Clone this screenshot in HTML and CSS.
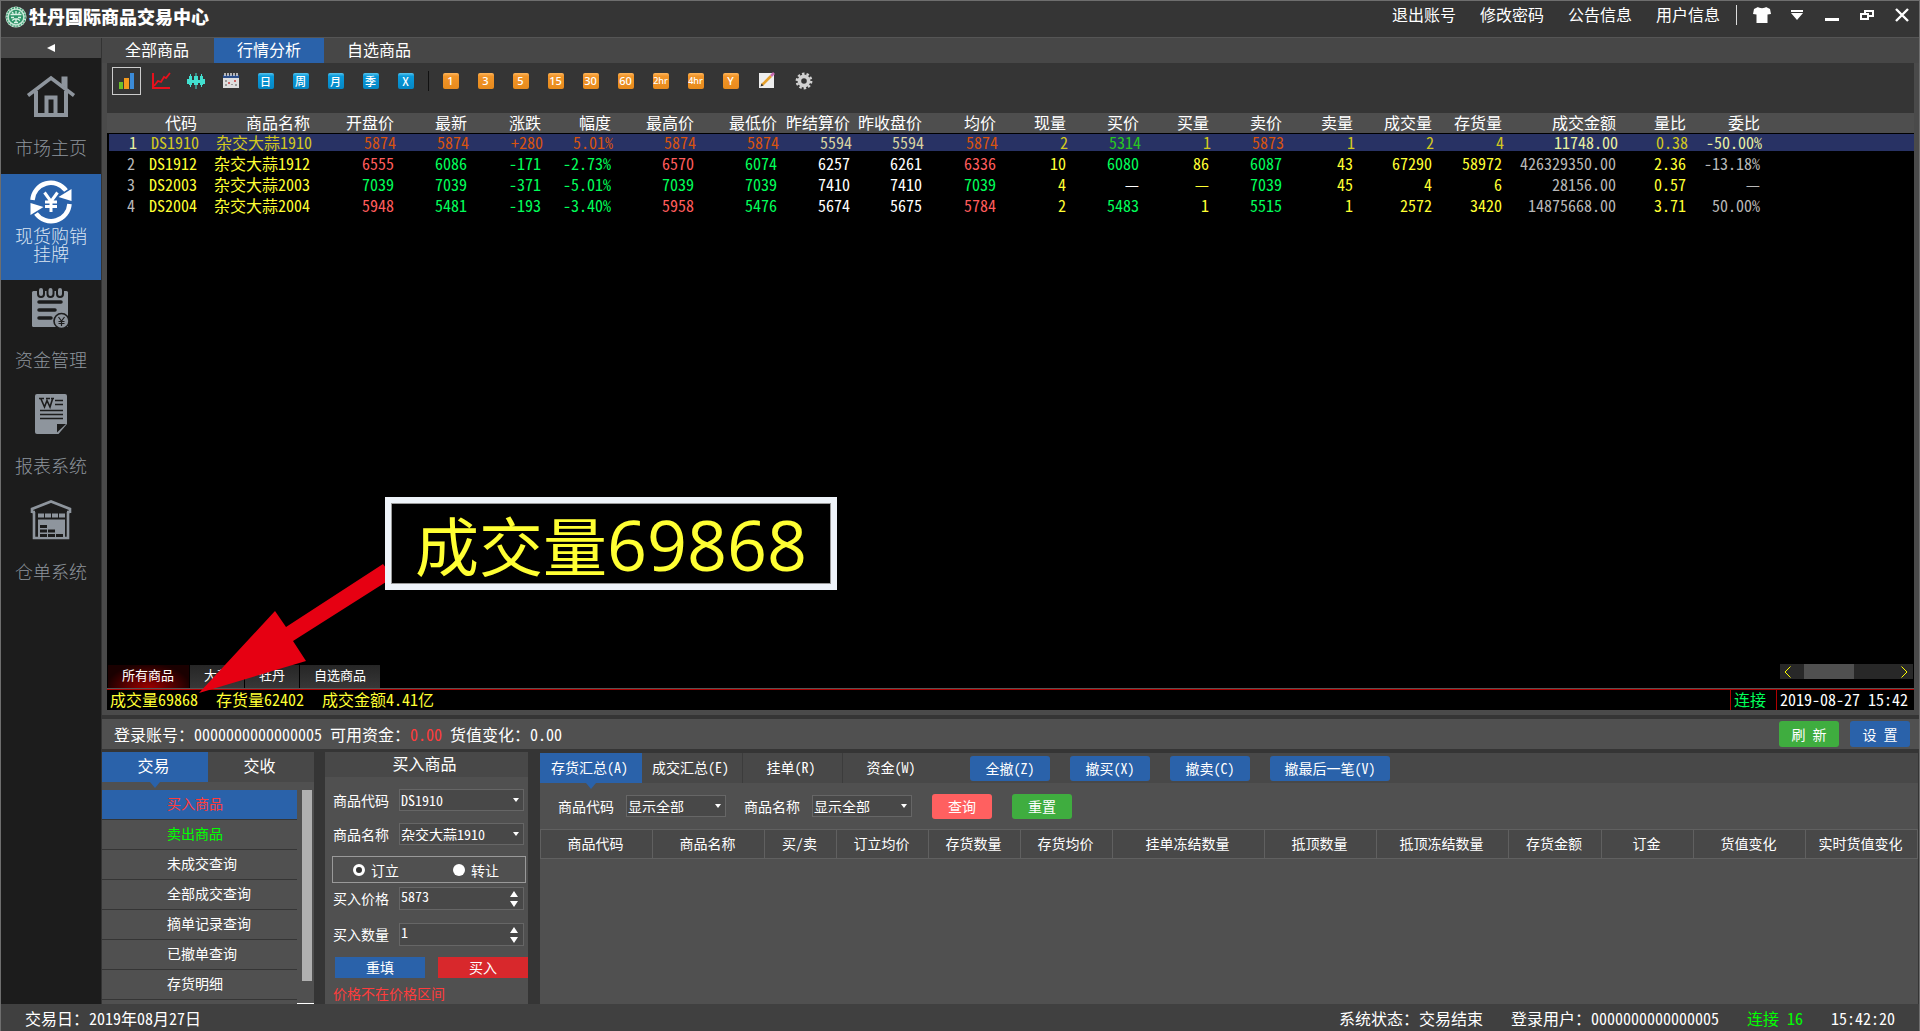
FILE: index.html
```html
<!DOCTYPE html>
<html lang="zh-CN">
<head>
<meta charset="utf-8">
<title>牡丹国际商品交易中心</title>
<link rel="stylesheet" href="styles.css">
</head>
<body>
<header class="titlebar">
  <svg class="logo" width="22" height="22" viewBox="0 0 22 22" aria-hidden="true">
    <circle cx="11" cy="11" r="10.5" fill="#c9e8d8"/>
    <circle cx="11" cy="11" r="9.2" fill="none" stroke="#3f9a72" stroke-width="1.4" stroke-dasharray="2 1"/>
    <circle cx="11" cy="11" r="7.2" fill="#2e9469"/>
    <path d="M5.500 8.500h11M7 6l1.500 1.500M15 6l-1.500 1.500M11 5v4M6 11.500h3M13 11.500h3M7 14.500l2.500-1.500h3l2.500 1.500M9 16.500h4M11 13v3.500" stroke="#d9f2e6" stroke-width="1.300" fill="none"/>
  </svg>
  <h1 class="brand">牡丹国际商品交易中心</h1>
  <nav class="account-menu">
    <a href="#">退出账号</a><a href="#">修改密码</a><a href="#">公告信息</a><a href="#">用户信息</a>
  </nav>
  <div class="window-tools">
    <button aria-label="换肤"><svg width="18" height="18" viewBox="0 0 18 18"><path fill="#fff" d="M5 1c1 1.500 7 1.500 8 0l4 2 1 5-3.500.500V17h-11V8.500L0 8l1-5z"/></svg></button>
    <button aria-label="菜单"><svg width="14" height="12" viewBox="0 0 14 12"><path fill="#fff" d="M1 1h12v2H1zM1 4h12L7 11z"/></svg></button>
    <button aria-label="最小化"><svg width="14" height="14" viewBox="0 0 14 14"><path fill="#fff" d="M0 10h14v3H0z"/></svg></button>
    <button aria-label="还原"><svg width="14" height="12" viewBox="0 0 14 12"><path fill="none" stroke="#fff" stroke-width="2" d="M5 4.500V2h8v5H8M1 5h7v5H1z"/></svg></button>
    <button aria-label="关闭"><svg width="14" height="14" viewBox="0 0 14 14"><path stroke="#fff" stroke-width="2.400" d="M1 1l12 12M13 1L1 13"/></svg></button>
  </div>
</header>

<div class="workspace">
  <aside class="sidebar">
    <button class="collapse" aria-label="收起"><svg width="8" height="8" viewBox="0 0 8 8"><path fill="#fff" d="M8 0v8L0 4z"/></svg></button>
    <nav class="modules">
      <a class="module" href="#">
        <svg width="50" height="44" viewBox="0 0 50 44"><g fill="none" stroke="#8e959d" stroke-width="4"><path d="M2 21.500L25 4l23 17.500" stroke-width="3.500"/><path d="M10 17v24h30V17" stroke-width="4"/><path d="M37 12V4h3v10" stroke-width="3"/><path d="M20.500 41V23.500h9V41" stroke-width="4"/></g></svg>
        <span>市场主页</span>
      </a>
      <a class="module active" href="#">
        <svg width="44" height="44" viewBox="0 0 44 44"><g fill="none" stroke="#fff" stroke-width="4.500"><path d="M3.500 20A18.500 18.500 0 0 1 37 10.500"/><path d="M40.500 24A18.500 18.500 0 0 1 7 33.500"/></g><path fill="#fff" d="M42.500 9v12l-13-4zM1.500 35V23l13 4z"/><path d="M15.500 12.500l6.500 9 6.500-9M16 22h12M16 26.500h12M22 21v11" fill="none" stroke="#fff" stroke-width="3"/></svg>
        <span>现货购销<br>挂牌</span>
      </a>
      <a class="module" href="#">
        <svg width="42" height="44" viewBox="0 0 42 44"><path fill="#8e959d" d="M2 6.500q0-1.500 1.500-1.500h33q1.500 0 1.500 1.500V41H3.500Q2 41 2 39.500z"/><g fill="#8e959d" stroke="#1c1c1c" stroke-width="2"><rect x="8" y="1" width="6" height="10" rx="3"/><rect x="17.500" y="1" width="6" height="10" rx="3"/><rect x="27" y="1" width="6" height="10" rx="3"/></g><path d="M9 16h22M9 24h16M9 32h12" stroke="#1c1c1c" stroke-width="3.500" stroke-linecap="round"/><circle cx="31.500" cy="35" r="7.500" fill="#8e959d" stroke="#1c1c1c" stroke-width="1.600"/><path d="M28.500 31l3 4 3-4M28.500 35.500h6M28.500 37.500h6M31.500 35v5" fill="none" stroke="#1c1c1c" stroke-width="1.200"/></svg>
        <span>资金管理</span>
      </a>
      <a class="module" href="#">
        <svg width="36" height="44" viewBox="0 0 36 44"><path fill="#8e959d" d="M2 4q0-2 2-2h28q2 0 2 2v28l-8.500 10H4q-2 0-2-2z"/><path fill="#1c1c1c" d="M24 32h9l-9 8.500z"/><path d="M22 8.500h8M22 12.500h8M7 18.500h23M7 22.500h23M7 26.500h23" stroke="#1c1c1c" stroke-width="1.300"/><path d="M6 6.500h5M8 7l3.500 8L14 8.500 17 15l2.500-8M13 6.500h4M18 6.500h3" fill="none" stroke="#1c1c1c" stroke-width="1.600"/></svg>
        <span>报表系统</span>
      </a>
      <a class="module" href="#">
        <svg width="42" height="44" viewBox="0 0 42 44"><path d="M2 15v-4L21 3.500 40 11v4M4 14v26h34V14M2 14h3M37 14h3" fill="none" stroke="#8e959d" stroke-width="2.600"/><path fill="#8e959d" d="M8 15.500h6v4H8zM15 15.500h6v4h-6zM22 15.500h6v4h-6zM29 15.500h6v4h-6zM8 21.500h27V40H8z"/><path fill="#1c1c1c" d="M10 27h7v3h-7zM10 31.500h7v3h-7zM10 36h7v3h-7zM18 31.500h7v3h-7zM18 36h7v3h-7zM26 36h7v3h-7z"/></svg>
        <span>仓单系统</span>
      </a>
    </nav>
  </aside>

  <main class="main">
    <nav class="view-tabs">
      <a href="#">全部商品</a><a class="active" href="#">行情分析</a><a href="#">自选商品</a>
    </nav>

    <section class="quotes">
      <div class="toolbar">
        <button class="tool selected" aria-label="报价"><svg width="18" height="18" viewBox="0 0 18 18"><path fill="#6abf2a" d="M1 10h4v7H1z"/><path fill="#f39a1e" d="M6 6h5v11H6z"/><path fill="#3b8bd8" d="M12 1h4v16h-4z"/></svg></button>
        <button class="tool" aria-label="分时"><svg width="20" height="18" viewBox="0 0 20 18"><path d="M2 1v15h17" fill="none" stroke="#e8101c" stroke-width="2"/><path d="M3 14l4-5 3 1 3-5 2 1 4-5" fill="none" stroke="#e8101c" stroke-width="1.800"/></svg></button>
        <button class="tool" aria-label="K线"><svg width="18" height="18" viewBox="0 0 18 18"><path fill="#42e0d0" d="M0 7h2v5H0zM2 4h3v9H2zM3 2h1v13H3zM5 8h2v3H5zM7 4h4v9H7zM8.500 1h1v16h-1zM11 8h2v3h-2zM13 4h3v9h-3zM14 2h1v13h-1zM16 7h2v5h-2z"/></svg></button>
        <button class="tool" aria-label="历史"><svg width="16" height="16" viewBox="0 0 16 16"><path fill="#dedede" d="M0 2h16v13H0z"/><path fill="#2d4f8a" d="M0 2h16v3H0z"/><path stroke="#ddd" stroke-width="1.500" d="M2 0v3M5 0v3M8 0v3M11 0v3M14 0v3"/><path fill="#999" d="M2 7h2v2H2zM2 11h2v2H2zM12 11h2v2h-2zM8 11h2v1H8z"/><path fill="#c66" d="M5 9h2v2H5zM11 7h2v2h-2z"/></svg></button>
        <button class="tool"><span class="chip">日</span></button>
        <button class="tool"><span class="chip">周</span></button>
        <button class="tool"><span class="chip">月</span></button>
        <button class="tool"><span class="chip">季</span></button>
        <button class="tool"><span class="chip">X</span></button>
        <span class="divider"></span>
        <button class="tool"><span class="chip minute">1</span></button>
        <button class="tool"><span class="chip minute">3</span></button>
        <button class="tool"><span class="chip minute">5</span></button>
        <button class="tool"><span class="chip minute">15</span></button>
        <button class="tool"><span class="chip minute">30</span></button>
        <button class="tool"><span class="chip minute">60</span></button>
        <button class="tool"><span class="chip minute hour">2hr</span></button>
        <button class="tool"><span class="chip minute hour">4hr</span></button>
        <button class="tool"><span class="chip minute">Y</span></button>
        <button class="tool util" aria-label="画线"><svg width="16" height="18" viewBox="0 0 16 18"><path fill="#eee" d="M0 1h15v15H0z"/><path d="M3 13L12 4" stroke="#e5a02c" stroke-width="2.600"/><path d="M12 4l3-3" stroke="#c86ab0" stroke-width="2.600"/><path fill="#333" d="M1.500 14.500l1-3 2 2z"/></svg></button>
        <button class="tool util" aria-label="设置"><svg width="18" height="18" viewBox="0 0 18 18"><circle cx="9" cy="9" r="7.200" fill="none" stroke="#d2d2d2" stroke-width="2.400" stroke-dasharray="2.500 2.026"/><circle cx="9" cy="9" r="4.600" fill="none" stroke="#d2d2d2" stroke-width="3.600"/></svg></button>
      </div>

      <table class="quote-table">
        <colgroup><col class="w28"><col class="w62"><col class="w113"><col class="w84"><col class="w73"><col class="w74"><col class="w70"><col class="w83"><col class="w83"><col class="w73"><col class="w72"><col class="w74"><col class="w70"><col class="w73"><col class="w70"><col class="w73"><col class="w71"><col class="w79"><col class="w70"><col class="w114"><col class="w70"><col class="w74"><col></colgroup>
        <thead><tr><th></th><th>代码</th><th>商品名称</th><th>开盘价</th><th>最新</th><th>涨跌</th><th>幅度</th><th>最高价</th><th>最低价</th><th>昨结算价</th><th>昨收盘价</th><th>均价</th><th>现量</th><th>买价</th><th>买量</th><th>卖价</th><th>卖量</th><th>成交量</th><th>存货量</th><th>成交金额</th><th>量比</th><th>委比</th><th></th></tr></thead>
        <tbody>
          <tr class="selected"><td class="p">1</td><td class="y">DS1910</td><td class="y">杂交大蒜1910</td><td class="r">5874</td><td class="r">5874</td><td class="r">+280</td><td class="r">5.01%</td><td class="r">5874</td><td class="r">5874</td><td class="w">5594</td><td class="w">5594</td><td class="r">5874</td><td class="y">2</td><td class="g">5314</td><td class="y">1</td><td class="r">5873</td><td class="y">1</td><td class="y">2</td><td class="y">4</td><td class="p">11748.00</td><td class="y">0.38</td><td class="p">-50.00%</td><td></td></tr>
          <tr><td class="p">2</td><td class="y">DS1912</td><td class="y">杂交大蒜1912</td><td class="r">6555</td><td class="g">6086</td><td class="g">-171</td><td class="g">-2.73%</td><td class="r">6570</td><td class="g">6074</td><td class="w">6257</td><td class="w">6261</td><td class="r">6336</td><td class="y">10</td><td class="g">6080</td><td class="y">86</td><td class="g">6087</td><td class="y">43</td><td class="y">67290</td><td class="y">58972</td><td class="p">426329350.00</td><td class="y">2.36</td><td class="p">-13.18%</td><td></td></tr>
          <tr><td class="p">3</td><td class="y">DS2003</td><td class="y">杂交大蒜2003</td><td class="g">7039</td><td class="g">7039</td><td class="g">-371</td><td class="g">-5.01%</td><td class="g">7039</td><td class="g">7039</td><td class="w">7410</td><td class="w">7410</td><td class="g">7039</td><td class="y">4</td><td class="w">—</td><td class="y">—</td><td class="g">7039</td><td class="y">45</td><td class="y">4</td><td class="y">6</td><td class="p">28156.00</td><td class="y">0.57</td><td class="p">—</td><td></td></tr>
          <tr><td class="p">4</td><td class="y">DS2004</td><td class="y">杂交大蒜2004</td><td class="r">5948</td><td class="g">5481</td><td class="g">-193</td><td class="g">-3.40%</td><td class="r">5958</td><td class="g">5476</td><td class="w">5674</td><td class="w">5675</td><td class="r">5784</td><td class="y">2</td><td class="g">5483</td><td class="y">1</td><td class="g">5515</td><td class="y">1</td><td class="y">2572</td><td class="y">3420</td><td class="p">14875668.00</td><td class="y">3.71</td><td class="p">50.00%</td><td></td></tr>
        </tbody>
      </table>

      <div class="board-foot">
        <nav class="board-tabs"><a class="active" href="#">所有商品</a><a href="#">大蒜</a><a href="#">牡丹</a><a href="#">自选商品</a></nav>
        <div class="hscroll">
          <svg width="7" height="12" viewBox="0 0 7 12"><path d="M6.500.500L1 6l5.500 5.500" fill="none" stroke="#ff0"/></svg>
          <span class="thumb"></span>
          <svg class="next" width="7" height="12" viewBox="0 0 7 12"><path d="M.500.500L6 6 .500 11.500" fill="none" stroke="#ff0"/></svg>
        </div>
      </div>
      <div class="totals">
        <span>成交量69868</span><span>存货量62402</span><span>成交金额4.41亿</span>
        <span class="link-state">连接</span><time class="market-time">2019-08-27 15:42</time>
      </div>

      <svg class="arrow" width="194" height="130" viewBox="0 0 194 130" aria-hidden="true"><path fill="#e60012" d="M0 129L76 47l11 16L184 0l10 13-7 5L94 77l13 20z"/></svg>
      <div class="callout"><span class="callout-label">成交量</span><span class="callout-value">69868</span></div>
    </section>

    <section class="account-bar">
      <p>登录账号：0000000000000005 可用资金：<span class="alert">0.00</span> 货值变化：0.00</p>
      <button class="btn green tall">刷 新</button><button class="btn blue tall">设 置</button>
    </section>

    <div class="desk">
      <section class="orders">
        <nav class="order-tabs"><a class="active" href="#">交易</a><a href="#">交收</a></nav>
        <div class="order-body">
          <ul class="order-menu">
            <li class="active"><a class="buy" href="#">买入商品</a></li>
            <li><a class="sell" href="#">卖出商品</a></li>
            <li><a href="#">未成交查询</a></li>
            <li><a href="#">全部成交查询</a></li>
            <li><a href="#">摘单记录查询</a></li>
            <li><a href="#">已撤单查询</a></li>
            <li><a href="#">存货明细</a></li>
          </ul>
          <div class="vscroll"><span></span></div>
        </div>
      </section>

      <form class="ticket">
        <h2>买入商品</h2>
        <div class="field"><label for="code">商品代码</label><span class="select"><select id="code"><option>DS1910</option></select></span></div>
        <div class="field"><label for="name">商品名称</label><span class="select"><select id="name"><option>杂交大蒜1910</option></select></span></div>
        <div class="mode">
          <label><input type="radio" name="mode" checked>订立</label>
          <label><input type="radio" name="mode">转让</label>
        </div>
        <div class="field number"><label for="price">买入价格</label><span class="spin"><input id="price" type="text" value="5873"><svg width="8" height="16" viewBox="0 0 8 16"><path fill="#fff" d="M4 0l4 6H0zM0 10h8l-4 6z"/></svg></span></div>
        <div class="field number"><label for="qty">买入数量</label><span class="spin"><input id="qty" type="text" value="1"><svg width="8" height="16" viewBox="0 0 8 16"><path fill="#fff" d="M4 0l4 6H0zM0 10h8l-4 6z"/></svg></span></div>
        <div class="actions"><button type="button" class="reset">重填</button><button type="button" class="submit">买入</button></div>
        <p class="error">价格不在价格区间</p>
      </form>

      <section class="holdings">
        <div class="holding-bar">
          <nav class="holding-tabs"><a class="active" href="#">存货汇总(A)</a><a href="#">成交汇总(E)</a><a href="#">挂单(R)</a><a href="#">资金(W)</a></nav>
          <div class="cancel"><button class="btn blue">全撤(Z)</button><button class="btn blue">撤买(X)</button><button class="btn blue">撤卖(C)</button><button class="btn blue wide">撤最后一笔(V)</button></div>
        </div>
        <div class="filter">
          <label for="fcode">商品代码</label><span class="select"><select id="fcode"><option>显示全部</option></select></span>
          <label class="second" for="fname">商品名称</label><span class="select"><select id="fname"><option>显示全部</option></select></span>
          <button class="btn red">查询</button><button class="btn green">重置</button>
        </div>
        <table class="holding-table">
          <colgroup><col class="w112"><col class="w112"><col class="w72"><col class="w92"><col class="w92"><col class="w92"><col class="w152"><col class="w112"><col class="w132"><col class="w93"><col class="w92"><col class="w112"><col></colgroup>
          <thead><tr><th>商品代码</th><th>商品名称</th><th>买/卖</th><th>订立均价</th><th>存货数量</th><th>存货均价</th><th>挂单冻结数量</th><th>抵顶数量</th><th>抵顶冻结数量</th><th>存货金额</th><th>订金</th><th>货值变化</th><th>实时货值变化</th></tr></thead>
        </table>
      </section>
    </div>
  </main>
</div>

<footer class="statusbar">
  <span class="trade-day">交易日：2019年08月27日</span>
  <span>系统状态：交易结束</span>
  <span>登录用户：0000000000000005</span>
  <span class="online">连接 16</span>
  <time>15:42:20</time>
</footer>
</body>
</html>
```
FILE: styles.css
```css
* { box-sizing: border-box; }

body {
  margin: 0;
  min-height: 100vh;
  display: flex;
  flex-direction: column;
  background: #353535;
  border: 1px solid #6e6e6e;
  border-bottom: 0;
  color: #fff;
  font: 300 16px/20px "Noto Sans Mono CJK SC", "Noto Sans CJK SC", monospace;
}

a { color: inherit; text-decoration: none; }
button, input, select { font: inherit; color: inherit; }
button { padding: 0; border: 0; background: none; cursor: pointer; white-space: nowrap; }
svg { display: block; flex: none; }
h1, h2, p, ul { margin: 0; padding: 0; font-weight: inherit; }
ul { list-style: none; }
table { border-collapse: collapse; border-spacing: 0; table-layout: fixed; width: 100%; }

/* title bar */
.titlebar {
  display: flex;
  align-items: flex-start;
  height: 37px;
  padding: 4px 0 0 4px;
  border-bottom: 1px solid #555;
}
.logo { margin-top: 1px; }
.brand { margin-left: 2px; font: 900 18px/22px "Noto Sans CJK SC", sans-serif; }
.account-menu { display: flex; gap: 24px; margin-left: auto; line-height: 18px; }
.window-tools { display: flex; align-items: center; height: 20px; margin-left: 16px; border-left: 1px solid #ddd; padding-left: 7px; }
.window-tools button { display: flex; justify-content: center; width: 35px; }

.workspace { flex: 1; display: flex; }

/* module sidebar */
.sidebar { flex: none; width: 101px; background: #1c1c1c; border-right: 1px solid #333; }
.collapse { display: flex; align-items: center; justify-content: center; width: 100%; height: 20px; background: #474747; }
.modules { padding-top: 10px; }
.module {
  display: flex;
  flex-direction: column;
  align-items: center;
  height: 106px;
  padding-top: 6px;
  gap: 20px;
  color: #8e959d;
  font: 300 18px/18px "Noto Sans CJK SC", sans-serif;
  text-align: center;
}
.module.active { gap: 2px; background: #2a62aa; color: #dbe5f2; }

.main { flex: 1; min-width: 0; display: flex; flex-direction: column; background: #4a4a4a; }

.view-tabs { display: flex; height: 25px; background: #474747; }
.view-tabs a { width: 110px; line-height: 22px; text-align: center; }
.view-tabs a.active { background: #2a62aa; }
.view-tabs a:first-child { width: 112px; padding-right: 2px; }

/* quotation board */
.quotes { position: relative; flex: 1; display: flex; flex-direction: column; margin: 0 5px; background: #000; }
.toolbar { display: flex; align-items: flex-start; height: 50px; padding: 4px 2px; background: #353535; }
.tool { display: flex; align-items: center; justify-content: center; width: 35px; height: 28px; border: 1px solid transparent; }
.tool.selected { width: 29px; margin: 0 2px 0 3px; border-color: #ccc; }
.tool.util { width: 37px; }
.divider { width: 1px; height: 20px; margin: 4px 4px 0 5px; background: #111; }
.chip {
  width: 16px; height: 16px;
  border-radius: 2px;
  background: linear-gradient(#58c4ec, #0a9adb 20%, #0587c4);
  font: 500 11px/16px "Noto Sans CJK SC", sans-serif;
  text-align: center;
}
.minute { background: linear-gradient(#ffb65c, #f2962a 20%, #e78a1c); font-family: "Noto Sans", sans-serif; }
.hour { font-size: 9px; }

.w28 { width: 28px; } .w62 { width: 62px; } .w70 { width: 70px; } .w71 { width: 71px; }
.w72 { width: 72px; } .w73 { width: 73px; } .w74 { width: 74px; } .w79 { width: 79px; }
.w83 { width: 83px; } .w84 { width: 84px; } .w92 { width: 92px; } .w93 { width: 93px; }
.w112 { width: 112px; } .w113 { width: 113px; } .w114 { width: 114px; } .w132 { width: 132px; }
.w152 { width: 152px; }

.quote-table th, .quote-table td { padding: 0; text-align: right; vertical-align: top; font-weight: inherit; white-space: nowrap; }
.quote-table thead { background: #4e4e4e; }
.quote-table th { height: 20px; line-height: 18px; }
.quote-table td { height: 21px; line-height: 19px; }
.y { color: #ff3; } .r { color: #ff5c5c; } .g { color: #00ff5a; } .w { color: #fff; } .p { color: #b8b8b8; }
.quote-table .selected { background: linear-gradient(#283264, #283264) 0 1px / 100% 17px no-repeat; }
.quote-table .selected td { position: relative; left: 2px; }
.selected .y { color: #d2c81e; } .selected .r { color: #d8540e; } .selected .g { color: #28c81e; }
.selected .w { color: #d8d2a0; } .selected .p { color: #e8f0a0; }

.board-foot { display: flex; align-items: flex-end; justify-content: space-between; margin-top: auto; }
.board-tabs { display: flex; gap: 1px; padding-left: 1px; font-size: 13px; }
.board-tabs a { height: 24px; padding: 0 14px; line-height: 19px; background: linear-gradient(#262626, #383838); }
.board-tabs a.active { padding: 0 15px 0 14px; background: radial-gradient(ellipse at 50% 100%, #a00000, #1a0000 75%); }
.hscroll { display: flex; align-items: center; width: 133px; height: 15px; margin: 0 1px 10px 0; padding: 0 5px 0 4px; background: #282828; }
.thumb { width: 50px; height: 15px; margin-left: 13px; background: #505050; }
.next { margin-left: auto; }

.totals { display: flex; gap: 18px; height: 21px; padding-left: 3px; line-height: 18px; color: #ff3; border-top: 1px solid #b00000; box-shadow: 0 -1px #555; }
.link-state { width: 46px; margin-left: auto; padding-left: 3px; color: #00ff5a; border-left: 1px solid #b00000; }
.market-time { width: 138px; margin-left: -18px; padding-left: 3px; color: #fff; border-left: 1px solid #b00000; white-space: nowrap; }

/* enlarged reading pinned over the board */
.callout {
  position: absolute; left: 278px; bottom: 120px;
  display: flex; align-items: baseline; justify-content: center;
  width: 452px; height: 93px;
  border: 6px solid #eef3f9;
  outline: 1px solid #999; outline-offset: -7px;
  background: #000; color: #ff3;
  font: 400 64px/80px "Noto Sans CJK SC", sans-serif;
}
.callout-value { font-family: "Open Sans", sans-serif; font-size: 70px; line-height: 80px; }
.arrow { position: absolute; left: 92px; bottom: 16px; }

/* account summary */
.account-bar { display: flex; align-items: center; gap: 11px; height: 37px; margin-top: 5px; padding: 0 9px 0 12px; background: #505050; border: solid #353535; border-width: 4px 0 3px; }
.account-bar p { flex: 1; }
.alert { color: #ff3c3c; }

.btn { width: 80px; height: 25px; border-radius: 3px; font-size: 14px; line-height: 24px; }
.btn.wide { width: 120px; }
.btn.tall { width: 60px; height: 26px; }
.blue { background: #2a62aa; }
.green { background: #3fad3f; }
.red { background: #ff6060; }

/* trading desk */
.desk { display: flex; background: #353535; font-size: 14px; }

.orders { flex: none; display: flex; flex-direction: column; width: 212px; background: #505050; }
.order-tabs { display: flex; height: 30px; background: #484848; font-size: 16px; }
.order-tabs a, .holding-tabs a { position: relative; text-align: center; }
.order-tabs a { flex: 1; padding-right: 3px; line-height: 27px; }
.order-tabs .active, .holding-tabs .active { background: #2a62aa; }
.order-tabs .active::after, .holding-tabs .active::after {
  content: ""; position: absolute; left: 50%; top: 100%; margin-left: -5px;
  border: 5px solid transparent; border-top: 6px solid #2a62aa; border-bottom: 0;
}
.order-body { flex: 1 1 0; display: flex; justify-content: space-between; margin-top: 8px; min-height: 0; }
.order-menu { width: 195px; overflow: hidden; }
.order-menu li { height: 30px; padding-left: 65px; line-height: 27px; border-bottom: 1px solid #353535; }
.order-menu .active { background: #2a62aa; }
.buy { color: #ff3c3c; }
.sell { color: #0f0; }
.vscroll { width: 17px; padding: 0 2px 22px 5px; border-bottom: 1px solid #fff; }
.vscroll span { display: block; height: 100%; background: #b0b0b0; }

.ticket { flex: none; width: 203px; margin: 0 12px 0 11px; background: #505050; }
.ticket h2 { height: 25px; padding-right: 4px; line-height: 23px; font-size: 16px; text-align: center; background: #484848; }
.field { display: flex; align-items: center; justify-content: space-between; height: 22px; margin: 12px 4px 0 8px; }
.field label { padding-bottom: 1px; }
.field .select, .spin { width: 125px; }
.select, .spin { position: relative; display: flex; height: 22px; }
.select select, .spin input { width: 100%; height: 100%; padding: 0 0 3px 1px; border: 1px solid #666; border-radius: 0; background: #484848; appearance: none; outline: 0; }
.select::after { content: ""; position: absolute; right: 5px; top: 9px; border: 3px solid transparent; border-top: 4px solid #fff; border-bottom: 0; }
.mode { display: flex; height: 27px; margin: 11px 2px 0 7px; padding-left: 20px; border: 1px solid #999; }
.mode label { display: flex; align-items: center; gap: 6px; width: 100px; }
.mode label + label { width: 60px; }
.mode input { appearance: none; width: 12px; height: 12px; margin: 0; border-radius: 50%; background: #fff; }
.mode input:checked { border: 3px solid #fff; background: #353535; }
.field.number { height: 23px; margin-top: 13px; }
.mode + .field.number { margin-top: 4px; }
.spin { height: 23px; }
.spin input { padding-bottom: 6px; }
.spin svg { position: absolute; right: 6px; top: 4px; }
.actions { display: flex; justify-content: space-between; margin: 11px 0 0 10px; }
.actions button { width: 90px; height: 21px; line-height: 21px; }
.reset { background: #2a62aa; }
.submit { background: #d8282c; }
.error { padding: 5px 0 1px 8px; color: #ff3c3c; }

.holdings { flex: 1; min-width: 0; margin: 1px 1px 0 0; background: #505050; }
.holding-bar { display: flex; align-items: center; gap: 28px; height: 30px; background: #484848; }
.holding-tabs { display: flex; }
.holding-tabs a { width: 100px; height: 30px; padding-right: 3px; line-height: 28px; border-left: 1px solid #3c3c3c; }
.holding-tabs .active { width: 102px; border: 0; }
.holding-tabs .active + a { border: 0; }
.cancel { display: flex; gap: 20px; }
.filter { display: flex; align-items: center; height: 46px; padding: 0 0 0 18px; }
.filter .select { width: 100px; margin-left: 12px; }
.filter .second { margin-left: 18px; }
.filter .btn { width: 60px; margin-left: 20px; }
.holding-table th { height: 29px; padding: 0 2px 2px 0; border: 1px solid #606060; background: #484848; font-weight: inherit; }

.statusbar { display: flex; align-items: center; gap: 28px; height: 27px; padding: 0 24px; background: #404040; }
.trade-day { margin-right: auto; }
.online { color: #0f0; }
```
